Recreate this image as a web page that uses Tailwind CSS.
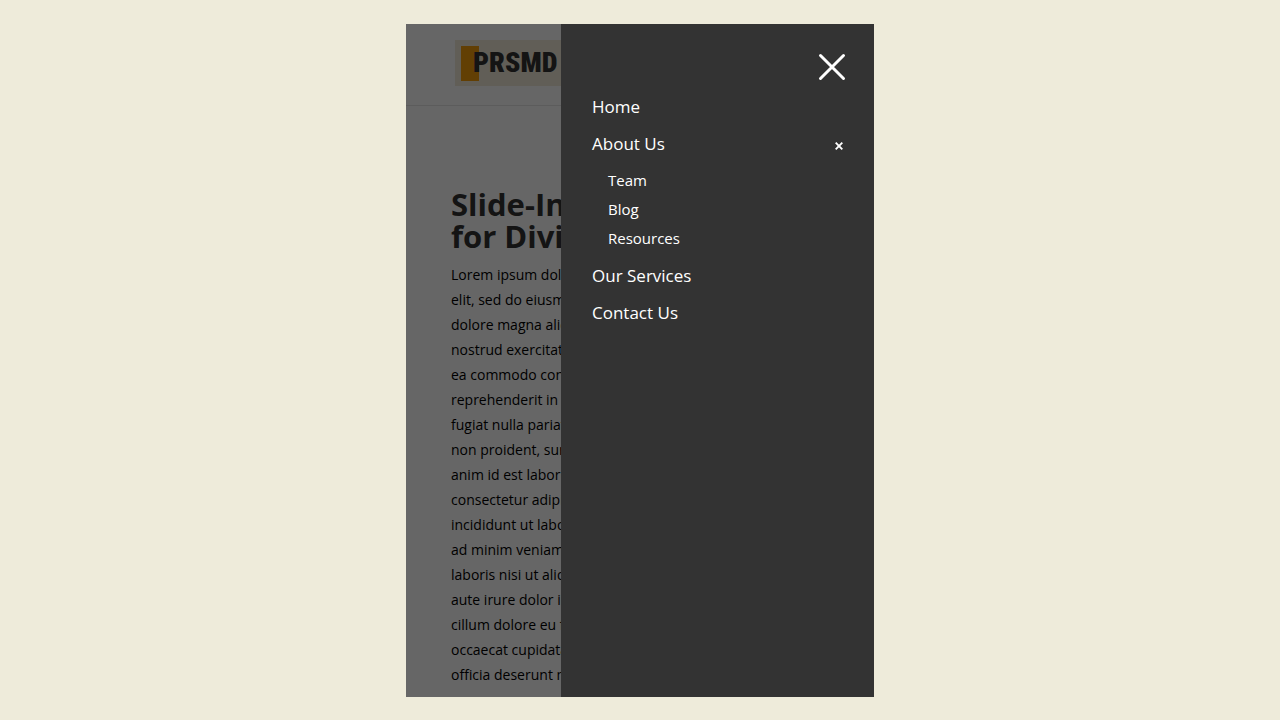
<!DOCTYPE html>
<html lang="en">
<head>
    <meta charset="UTF-8">
    <meta name="viewport" content="width=device-width, initial-scale=1.0">
    <title>Slide-In Mobile Menu for Divi</title>
    <script src="https://cdn.jsdelivr.net/npm/@tailwindcss/browser@4"></script>
</head>
<body class="bg-[#eeebda] h-screen flex justify-center pt-6 pb-[23px] font-['Open_Sans',sans-serif]">
    <div class="relative w-full max-w-[468px] h-full overflow-hidden bg-white">
        <!-- Page behind the menu -->
        <header class="h-[82px] px-[49px] flex items-start pt-4 border-b border-[#e6e6e6]">
            <a href="#" class="flex items-center w-40 h-[46px] pl-[6px] bg-[#f3ebd9]">
                <span class="w-[18px] h-[35px] bg-[#f59f0a]"></span>
                <span class="-ml-[6px] text-[28px] leading-none font-black text-[#333333] font-['Roboto_Condensed','Liberation_Sans_Narrow','Open_Sans',sans-serif]">PRSMD</span>
            </a>
        </header>
        <main class="px-[45px] pt-[82px] whitespace-nowrap">
            <h1 class="text-[31px] leading-8 font-bold text-[#333333]">Slide-In Mobile Menu<br>for Divi</h1>
            <p class="pt-[10px] text-sm leading-[25px] text-black">
                Lorem ipsum dolor sit amet, consectetur adipiscing<br>
                elit, sed do eiusmod tempor incididunt ut labore et<br>
                dolore magna aliqua. Ut enim ad minim veniam, quis<br>
                nostrud exercitation ullamco laboris nisi ut aliquip ex<br>
                ea commodo consequat. Duis aute irure dolor in<br>
                reprehenderit in voluptate velit esse cillum dolore eu<br>
                fugiat nulla pariatur. Excepteur sint occaecat cupidatat<br>
                non proident, sunt in culpa qui officia deserunt mollit<br>
                anim id est laborum.Lorem ipsum dolor sit amet,<br>
                consectetur adipiscing elit, sed do eiusmod tempor<br>
                incididunt ut labore et dolore magna aliqua. Ut enim<br>
                ad minim veniam, quis nostrud exercitation ullamco<br>
                laboris nisi ut aliquip ex ea commodo consequat. Duis<br>
                aute irure dolor in reprehenderit in voluptate velit esse<br>
                cillum dolore eu fugiat nulla pariatur. Excepteur sint<br>
                occaecat cupidatat non proident, sunt in culpa qui<br>
                officia deserunt mollit
            </p>
        </main>

        <div class="absolute inset-0 bg-black/60"></div>

        <!-- Slide-in menu -->
        <nav class="absolute inset-y-0 right-0 w-[313px] bg-[#333333] pt-[29px] px-7 text-white font-medium">
            <div class="flex justify-end">
                <button type="button" aria-label="Close menu">
                    <svg class="size-7" viewBox="0 0 28 28" fill="none" stroke="currentColor" stroke-width="3" stroke-linecap="round">
                        <path d="M2.5 2.5l23 23M25.5 2.5l-23 23" />
                    </svg>
                </button>
            </div>
            <ul class="pl-[3px] pt-[14px] flex flex-col gap-[13px] text-[17px] leading-6">
                <li><a href="#">Home</a></li>
                <li>
                    <div class="flex items-center justify-between">
                        <a href="#">About Us</a>
                        <button type="button" aria-label="Collapse About Us" class="pt-[4px] pr-[3px]">
                            <svg class="size-2" viewBox="0 0 8 8" fill="none" stroke="currentColor" stroke-width="1.9">
                                <path d="M.7 .7l6.6 6.6M7.3 .7l-6.6 6.6" />
                            </svg>
                        </button>
                    </div>
                    <ul class="pl-4 pt-3 pb-px flex flex-col gap-[5px] text-[15px] leading-6">
                        <li><a href="#">Team</a></li>
                        <li><a href="#">Blog</a></li>
                        <li><a href="#">Resources</a></li>
                    </ul>
                </li>
                <li><a href="#">Our Services</a></li>
                <li><a href="#">Contact Us</a></li>
            </ul>
        </nav>
    </div>
</body>
</html>
